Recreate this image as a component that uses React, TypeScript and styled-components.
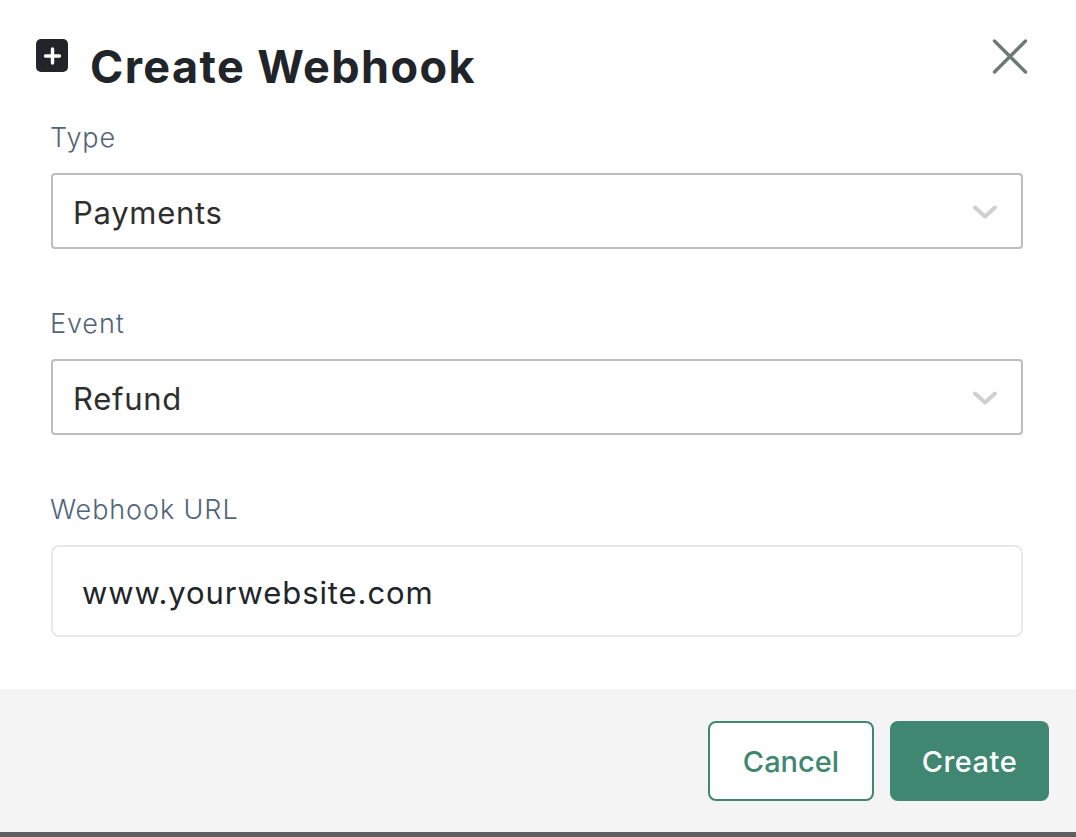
import React from "react";
import styled, { createGlobalStyle } from "styled-components";

const GlobalStyle = createGlobalStyle`
  html, body {
    margin: 0;
    padding: 0;
    background: #fff;
  }
  * {
    box-sizing: border-box;
  }
`;

const App = () => {
  return (
    <>
      <GlobalStyle />
      <Modal>
        <Header>
          <TitleGroup>
            <PlusBadge>
              <svg width="32" height="33" viewBox="0 0 32 33" fill="none">
                <path
                  d="M16.5 10v14M9.5 17h14"
                  stroke="#fff"
                  strokeWidth="3.4"
                  strokeLinecap="round"
                />
              </svg>
            </PlusBadge>
            <Title>Create Webhook</Title>
          </TitleGroup>
          <CloseButton>
            <svg width="36" height="36" viewBox="0 0 36 36" fill="none">
              <path
                d="M2.5 2l31 31M33.5 2l-31 31"
                stroke="#6c7a76"
                strokeWidth="3.4"
                strokeLinecap="round"
              />
            </svg>
          </CloseButton>
        </Header>
        <Form>
          <Field>
            <Label>Type</Label>
            <SelectBox>
              <SelectValue>Payments</SelectValue>
              <Chevron />
            </SelectBox>
          </Field>
          <Field>
            <Label>Event</Label>
            <SelectBox>
              <SelectValue>Refund</SelectValue>
              <Chevron />
            </SelectBox>
          </Field>
          <Field>
            <Label>Webhook URL</Label>
            <TextBox>www.yourwebsite.com</TextBox>
          </Field>
        </Form>
        <Footer>
          <CancelButton>Cancel</CancelButton>
          <CreateButton>Create</CreateButton>
        </Footer>
      </Modal>
    </>
  );
};

const Chevron = () => (
  <svg width="24" height="14" viewBox="0 0 24 14" fill="none">
    <path
      d="M2 2.5l10 9 10-9"
      stroke="#cfcfcf"
      strokeWidth="4"
      strokeLinecap="round"
      strokeLinejoin="round"
    />
  </svg>
);

const Modal = styled.div`
  width: 1076px;
  height: 837px;
  display: flex;
  flex-direction: column;
  background: #fff;
  font-family: "Inter", "Liberation Sans", sans-serif;
  overflow: hidden;
`;

const Header = styled.div`
  height: 122px;
  padding: 39px 48px 0 36px;
  display: flex;
  justify-content: space-between;
  align-items: flex-start;
`;

const TitleGroup = styled.div`
  display: flex;
  align-items: flex-start;
  gap: 22px;
`;

const PlusBadge = styled.div`
  width: 32px;
  height: 33px;
  border-radius: 5px;
  background: #212529;
  display: flex;
`;

const Title = styled.h1`
  margin: 0;
  font-size: 45px;
  line-height: 56px;
  font-weight: 700;
  letter-spacing: 1.4px;
  color: #212529;
`;

const CloseButton = styled.div`
  width: 36px;
  height: 36px;
  display: flex;
`;

const Form = styled.div`
  flex: 1;
  padding: 0 53px 0 51px;
  display: flex;
  flex-direction: column;
  gap: 59px;
`;

const Field = styled.div`
  display: flex;
  flex-direction: column;
  gap: 20px;
`;

const Label = styled.div`
  margin-left: -1px;
  font-size: 27px;
  line-height: 30px;
  padding-top: 1px;
  font-weight: 300;
  letter-spacing: 0.9px;
  color: #52647a;
`;

const SelectBox = styled.div`
  height: 76px;
  padding: 2px 24px 0 20px;
  border: 2px solid #bdbdbd;
  border-radius: 4px;
  display: flex;
  align-items: center;
  justify-content: space-between;
`;

const SelectValue = styled.span`
  font-size: 31px;
  font-weight: 400;
  letter-spacing: 0.7px;
  color: #2e2e2e;
`;

const TextBox = styled.div`
  height: 92px;
  padding: 2px 29px 0;
  border: 2px solid #e6e8ec;
  border-radius: 8px;
  display: flex;
  align-items: center;
  font-size: 31px;
  letter-spacing: 0.9px;
  color: #212529;
`;

const Footer = styled.div`
  height: 148px;
  padding: 32px 27px 0 0;
  background: #f4f4f4;
  border-bottom: 5px solid #5f5f62;
  display: flex;
  justify-content: flex-end;
  align-items: flex-start;
  gap: 16px;
`;

const BaseButton = styled.div`
  height: 80px;
  border-radius: 8px;
  display: flex;
  align-items: center;
  justify-content: center;
  font-size: 29px;
  font-weight: 500;
`;

const CancelButton = styled(BaseButton)`
  width: 166px;
  background: #fff;
  border: 2px solid #3f8770;
  color: #3f8770;
`;

const CreateButton = styled(BaseButton)`
  width: 159px;
  background: #3f8770;
  letter-spacing: 0.5px;
  color: #fff;
`;

export default App;
